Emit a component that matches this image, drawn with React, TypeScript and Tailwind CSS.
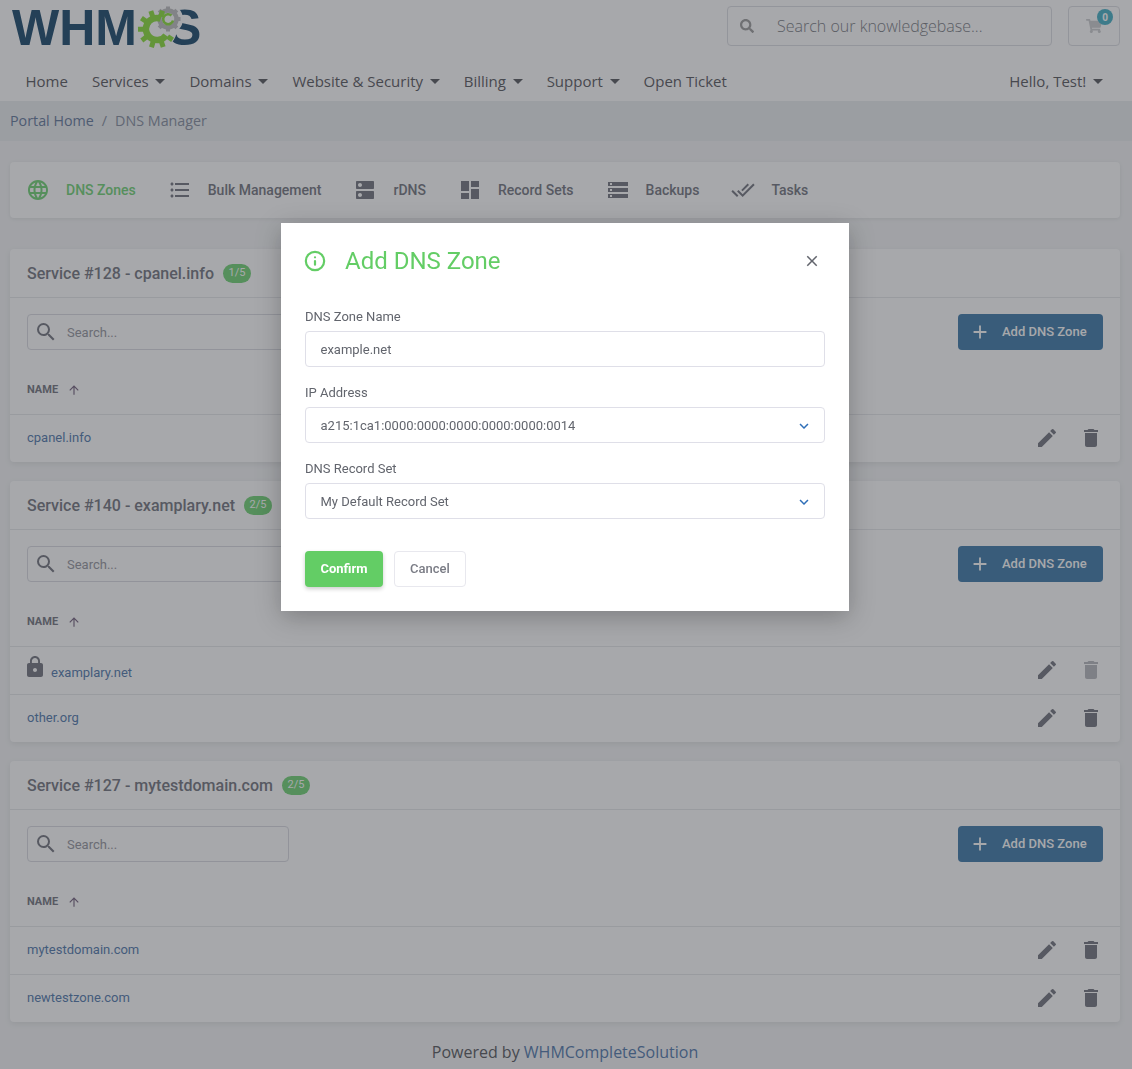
import { Info } from 'lucide-react';
import { FaSearch, FaShoppingCart } from 'react-icons/fa';
import {
  MdAdd,
  MdArrowUpward,
  MdClose,
  MdDashboard,
  MdDelete,
  MdDns,
  MdDoneAll,
  MdEdit,
  MdFormatListBulleted,
  MdKeyboardArrowDown,
  MdLanguage,
  MdLock,
  MdSearch,
  MdStorage,
} from 'react-icons/md';

const navItems = [
  { label: 'Home' },
  { label: 'Services', caret: true },
  { label: 'Domains', caret: true },
  { label: 'Website & Security', caret: true },
  { label: 'Billing', caret: true },
  { label: 'Support', caret: true },
  { label: 'Open Ticket' },
];

const tabs = [
  { label: 'DNS Zones', icon: MdLanguage, active: true },
  { label: 'Bulk Management', icon: MdFormatListBulleted },
  { label: 'rDNS', icon: MdDns },
  { label: 'Record Sets', icon: MdDashboard },
  { label: 'Backups', icon: MdStorage },
  { label: 'Tasks', icon: MdDoneAll },
];

type Zone = { name: string; locked?: boolean };

const services: { title: string; count: string; zones: Zone[] }[] = [
  { title: 'Service #128 - cpanel.info', count: '1/5', zones: [{ name: 'cpanel.info' }] },
  {
    title: 'Service #140 - examplary.net',
    count: '2/5',
    zones: [{ name: 'examplary.net', locked: true }, { name: 'other.org' }],
  },
  {
    title: 'Service #127 - mytestdomain.com',
    count: '2/5',
    zones: [{ name: 'mytestdomain.com' }, { name: 'newtestzone.com' }],
  },
];

const grayTeeth = [0, 45, 90, 135, 180, 225, 270, 315];
const greenTeeth = [17, 125, 161, 197, 233, 269, 305, 341];

function Caret() {
  return <span className="ml-[6.7px] inline-block border-x-[5px] border-t-[5px] border-x-transparent border-t-[#5f6166]" />;
}

function Logo() {
  return (
    <div className="-mt-[3px] flex items-start font-['Liberation_Sans',sans-serif] text-[50px] leading-none font-bold text-[#265273]">
      <span>WHM</span>
      <svg viewBox="0 0 46 44" className="relative mt-[2px] -mr-[15px] h-[44px] w-[46px] shrink-0">
        <circle cx="20" cy="24" r="20" fill="#fff" />
        <circle cx="31" cy="14" r="15" fill="#fff" />
        {grayTeeth.map((a) => (
          <rect key={a} x="29" y="1.5" width="4" height="5" fill="#c1c1c3" transform={`rotate(${a} 31 14)`} />
        ))}
        <circle cx="31" cy="14" r="8.5" fill="none" stroke="#c1c1c3" strokeWidth="4.5" />
        <path d="M34.5 10.5a5 5 0 1 0 1.5 5" fill="none" stroke="#8fe043" strokeWidth="2.6" />
        {greenTeeth.map((a) => (
          <rect key={a} x="17.5" y="5" width="5" height="6" fill="#8fe043" transform={`rotate(${a} 20 24)`} />
        ))}
        <path d="M23.8 13.7A11 11 0 1 0 29 30.3" fill="none" stroke="#8fe043" strokeWidth="6.5" />
      </svg>
      <span>S</span>
    </div>
  );
}

function Header() {
  return (
    <header className="bg-white">
      <div className="flex h-[61px] items-start justify-between pt-[6px] pr-3 pl-3">
        <Logo />
        <div className="flex gap-4">
          <div className="flex h-10 w-[325px] items-center rounded border border-[#dee0e4] pl-3">
            <FaSearch size={14} className="text-[#a2a2a2]" />
            <span className="ml-[23px] font-['Open_Sans',sans-serif] text-base font-light text-[#7f8389]">
              Search our knowledgebase...
            </span>
          </div>
          <div className="relative flex h-10 w-[52px] items-center justify-center rounded border border-[#dee0e4]">
            <FaShoppingCart size={16} className="text-[#cfd0d2]" />
            <span className="absolute top-[2px] right-[6px] flex size-4 items-center justify-center rounded-full bg-[#4fb5c9] font-['Open_Sans',sans-serif] text-[10px] font-bold text-white">
              0
            </span>
          </div>
        </div>
      </div>
      <nav className="flex h-10 items-center justify-between pr-[29px] pl-[25.5px] font-['Open_Sans',sans-serif] text-[15px] text-[#5f6166]">
        <div className="flex gap-6">
          {navItems.map((item) => (
            <span key={item.label} className="flex items-center">
              {item.label}
              {item.caret && <Caret />}
            </span>
          ))}
        </div>
        <span className="flex items-center">
          Hello, Test!
          <Caret />
        </span>
      </nav>
    </header>
  );
}

function Tabs() {
  return (
    <div className="mt-[21px] flex h-14 items-center gap-8 rounded bg-white pl-4 shadow-[0_1px_4px_rgba(0,0,0,0.08)]">
      {tabs.map((t) => {
        const Icon = t.icon;
        return (
          <div key={t.label} className="flex items-center gap-4 text-sm font-medium">
            <Icon size={24} className={t.active ? 'text-[#78d57c]' : 'text-[#7a7c85]'} />
            <span className={t.active ? 'text-[#78d57c]' : 'text-[#7a7c85]'}>{t.label}</span>
          </div>
        );
      })}
    </div>
  );
}

function ServiceCard({ title, count, zones }: { title: string; count: string; zones: Zone[] }) {
  return (
    <section className="rounded-sm bg-white shadow-[0_2px_6px_rgba(0,0,0,0.08)]">
      <div className="flex h-[49px] items-center gap-[9px] border-b border-[#e8e9ec] pt-[1px] pl-[17px] text-base font-medium text-[#7a7c85]">
        {title}
        <span className="flex h-[19px] items-center rounded-full bg-[#78d57c] px-[5.5px] text-[11px] font-normal text-white">
          {count}
        </span>
      </div>
      <div className="flex items-center justify-between pt-4 pr-[17px] pl-[17px]">
        <div className="flex h-9 w-[262px] items-center rounded-sm border border-[#dcdde3] pl-[6px]">
          <MdSearch size={24} className="text-[#7a7c85]" />
          <span className="ml-[9px] pt-[1px] text-[13px] text-[#9a9ba3]">Search...</span>
        </div>
        <button type="button" className="flex h-9 w-[145px] items-center rounded-sm bg-[#4881ae] pl-[11px] text-[13px] font-medium text-white">
          <MdAdd size={22} />
          <span className="ml-[11px]">Add DNS Zone</span>
        </button>
      </div>
      <div className="flex h-[65px] items-end border-b border-[#e8e9ec] pb-4 pl-[17px] text-[11px] font-bold text-[#7a7c85]">
        NAME
        <MdArrowUpward size={14} className="mb-[1px] ml-[9px] text-[#7b6a85]" />
      </div>
      {zones.map((z, i) => (
        <div
          key={z.name}
          className={`flex items-center justify-between pr-[17px] pb-[2px] pl-[17px] text-[13px] text-[#5a7fb0] ${i > 0 ? 'h-12 border-t border-[#e8e9ec]' : 'h-[47px]'}`}
        >
          <span className="flex items-center gap-1">
            {z.locked && <MdLock size={24} className="-mt-[6px] -ml-1 text-[#7a7c85]" />}
            <span className={z.locked ? 'mt-[6px]' : ''}>{z.name}</span>
          </span>
          <span className="flex gap-5 text-[#7a7c85]">
            <MdEdit size={24} />
            <MdDelete size={24} className={z.locked ? 'opacity-50' : ''} />
          </span>
        </div>
      ))}
    </section>
  );
}

function Field({ label, value, select }: { label: string; value: string; select?: boolean }) {
  return (
    <div>
      <div className="mb-[5px] text-[13px] leading-[18px] text-[#62656d]">{label}</div>
      <div className="flex h-9 items-center justify-between rounded-sm border border-[#dfdfe8] pt-[1px] pr-[11px] pl-[14.5px] text-[13px] text-[#62656d]">
        {value}
        {select && <MdKeyboardArrowDown size={18} className="text-[#2f6fb8]" />}
      </div>
    </div>
  );
}

function AddZoneModal() {
  return (
    <div className="fixed inset-0 bg-[#22252c]/40">
      <div className="absolute top-[223px] left-[281px] flex h-[388px] w-[568px] flex-col bg-white px-6 pt-6 shadow-[0_6px_24px_rgba(0,0,0,0.25)]">
        <div className="flex h-[27px] items-center">
          <Info size={22} strokeWidth={2.4} className="-ml-[1px] text-[#63cd65]" />
          <h2 className="ml-[19px] text-2xl font-normal text-[#63cd65]">Add DNS Zone</h2>
          <MdClose size={18} className="mr-[4px] ml-auto text-[#62656d]" />
        </div>
        <div className="mt-[34px] flex flex-col gap-[17px]">
          <Field label="DNS Zone Name" value="example.net" />
          <Field label="IP Address" value="a215:1ca1:0000:0000:0000:0000:0000:0014" select />
          <Field label="DNS Record Set" value="My Default Record Set" select />
        </div>
        <div className="mt-8 flex gap-[11px]">
          <button type="button" className="h-9 w-[78px] rounded-sm bg-[#63cd65] text-[13px] font-bold text-white shadow-[0_2px_4px_rgba(0,0,0,0.2)]">
            Confirm
          </button>
          <button type="button" className="h-9 w-[72px] rounded-sm border border-[#e8e8ee] text-[13px] font-medium text-[#7a7c85]">
            Cancel
          </button>
        </div>
      </div>
    </div>
  );
}

export default function App() {
  return (
    <div className="h-screen overflow-hidden bg-[#f5f6f7] font-['Roboto',sans-serif]">
      <Header />
      <div className="flex h-10 items-center bg-[#ebeef1] pl-[10px] font-['Open_Sans',sans-serif] text-[14.3px] text-[#8a93a3]">
        <span className="text-[#6b80a0]">Portal Home</span>
        <span className="mx-2">/</span>
        DNS Manager
      </div>
      <main className="pr-3 pl-[10px]">
        <Tabs />
        <div className="mt-[31px] flex flex-col gap-[19px]">
          {services.map((s) => (
            <ServiceCard key={s.title} {...s} />
          ))}
        </div>
        <footer className="mt-[18px] text-center font-['Open_Sans',sans-serif] text-base text-[#5f6166]">
          Powered by <span className="text-[#5a7fb0]">WHMCompleteSolution</span>
        </footer>
      </main>
      <AddZoneModal />
    </div>
  );
}
